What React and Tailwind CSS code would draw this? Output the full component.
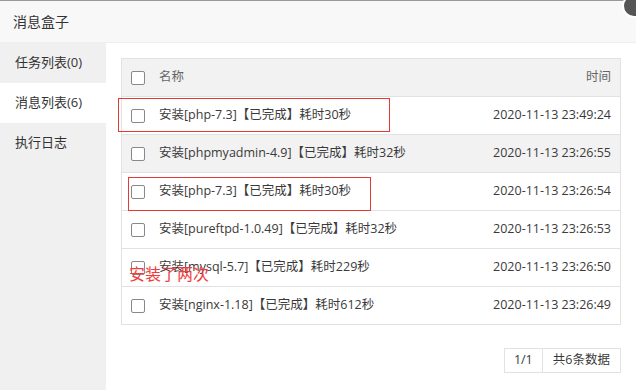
import React from "react";

const rows = [
  { name: "安装[php-7.3]【已完成】耗时30秒", time: "2020-11-13 23:49:24" },
  { name: "安装[phpmyadmin-4.9]【已完成】耗时32秒", time: "2020-11-13 23:26:55", hover: true },
  { name: "安装[php-7.3]【已完成】耗时30秒", time: "2020-11-13 23:26:54" },
  { name: "安装[pureftpd-1.0.49]【已完成】耗时32秒", time: "2020-11-13 23:26:53" },
  { name: "安装[mysql-5.7]【已完成】耗时229秒", time: "2020-11-13 23:26:50" },
  { name: "安装[nginx-1.18]【已完成】耗时612秒", time: "2020-11-13 23:26:49" },
];

function Box() {
  return <span className="block w-[14px] h-[14px] border border-[#888] rounded-[2px] bg-white shrink-0" />;
}

export default function App() {
  return (
    <div
      className="relative w-[636px] h-[390px] overflow-hidden bg-white text-[#3a3a3a]"
      style={{ fontFamily: '"Open Sans", "Noto Sans CJK SC", sans-serif' }}
    >
      <div className="h-px bg-[#999]" />
      <div className="h-[42px] bg-[#f8f8f8] border-b border-[#eee] flex items-center pl-[13px] text-[14px] text-[#333]">
        消息盒子
      </div>
      <div className="flex h-[347px]">
        <div className="w-[106px] bg-[#f0f0f0] text-[13px] text-[#333]">
          <div className="h-[40px] flex items-center pl-[15px]">任务列表(0)</div>
          <div className="h-[40px] flex items-center pl-[15px] bg-white">消息列表(6)</div>
          <div className="h-[40px] flex items-center pl-[15px]">执行日志</div>
        </div>
        <div className="flex-1 pt-[15px] pl-[15px] pr-[15px]">
          <div className="border border-[#e2e2e2] text-[12.5px]">
            <div className="h-[37px] bg-[#f2f2f2] flex items-center pl-[9px] pr-[9px] text-[#666]">
              <Box />
              <span className="ml-[14px] flex-1">名称</span>
              <span>时间</span>
            </div>
            {rows.map((r, i) => (
              <div
                key={i}
                className={`h-[38px] border-t border-[#e2e2e2] flex items-center pl-[9px] pr-[9px] ${r.hover ? "bg-[#f2f2f2]" : "bg-white"}`}
              >
                <Box />
                <span className="ml-[14px] flex-1">{r.name}</span>
                <span>{r.time}</span>
              </div>
            ))}
          </div>
          <div className="flex justify-end mt-[23px]">
            <div className="flex border border-[#e2e2e2] h-[25px] text-[12.5px]">
              <span className="w-[38px] flex items-center justify-center border-r border-[#e2e2e2]">1/1</span>
              <span className="px-[10px] flex items-center">共6条数据</span>
            </div>
          </div>
        </div>
      </div>

      <div className="absolute left-[622px] -top-[6px] w-[24px] h-[24px] rounded-full bg-[#555] border-2 border-white" />
      <div className="absolute left-[118px] top-[98px] w-[272px] h-[34px] border border-[#e53935]" />
      <div className="absolute left-[128px] top-[177px] w-[243px] h-[34px] border border-[#e53935]" />
      <div className="absolute left-[129px] top-[263px] text-[16px] leading-[22px] text-[#f03c3c]">安装了两次</div>
    </div>
  );
}
